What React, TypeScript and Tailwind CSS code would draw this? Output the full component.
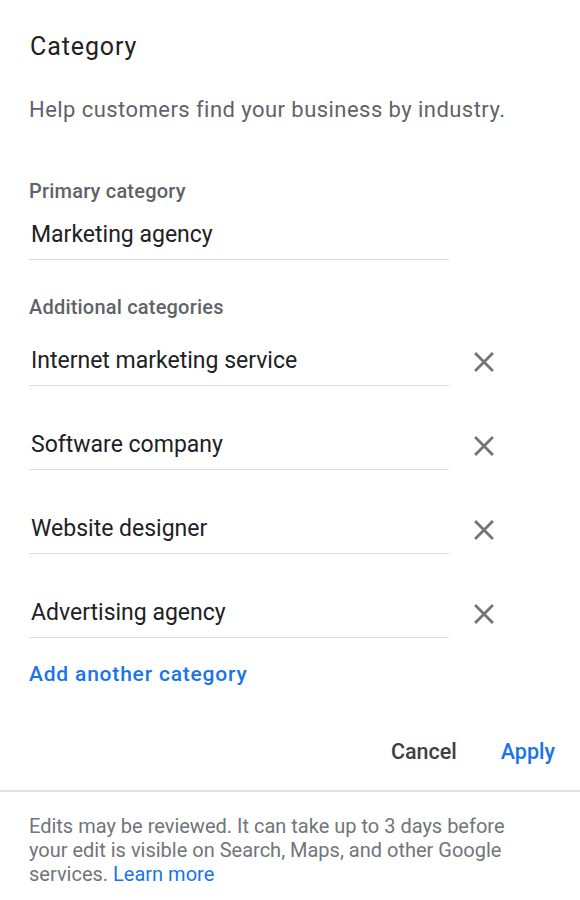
import React from "react";

const CloseIcon = () => (
  <svg width="34" height="34" viewBox="0 0 24 24" fill="#757575">
    <path d="M19 6.41L17.59 5 12 10.59 6.41 5 5 6.41 10.59 12 5 17.59 6.41 19 12 13.41 17.59 19 19 17.59 13.41 12z" />
  </svg>
);

const Field = ({ value, removable }: { value: string; removable?: boolean }) => (
  <div className="flex items-center">
    <div className="w-[420px] border-b border-[#dadce0] pb-[10px] pl-[2px] text-[23px] leading-[28px] text-[#202124]">
      {value}
    </div>
    {removable && (
      <div className="ml-[18px] -mt-[10px] flex items-center justify-center">
        <CloseIcon />
      </div>
    )}
  </div>
);

export default function App() {
  const extra = [
    "Internet marketing service",
    "Software company",
    "Website designer",
    "Advertising agency",
  ];
  return (
    <div
      className="w-[580px] h-[900px] bg-white overflow-hidden"
      style={{ fontFamily: "Roboto, 'Noto Sans', sans-serif" }}
    >
      <div className="px-[29px]">
        <div className="pt-[31px] text-[25px] leading-[32px] tracking-[0.9px] text-[#202124] pl-[1px]">
          Category
        </div>
        <div className="mt-[33px] text-[22px] leading-[28px] tracking-[0.45px] text-[#5f6368]">
          Help customers find your business by industry.
        </div>
        <div className="mt-[55px] text-[20px] leading-[24px] tracking-[0.2px] font-medium text-[#5f6368]">
          Primary category
        </div>
        <div className="mt-[18px]">
          <Field value="Marketing agency" />
        </div>
        <div className="mt-[35px] text-[20px] leading-[24px] tracking-[0.2px] font-medium text-[#5f6368]">
          Additional categories
        </div>
        <div className="mt-[28px] flex flex-col gap-[45px]">
          {extra.map((e) => (
            <Field key={e} value={e} removable />
          ))}
        </div>
        <div className="mt-[24px] text-[21px] leading-[24px] font-medium text-[#1a73e8] tracking-[0.8px]">
          Add another category
        </div>
        <div className="mt-[54px] flex justify-end gap-[44px] -mr-[4px] text-[21.5px] leading-[24px] font-medium">
          <span className="text-[#3c4043]">Cancel</span>
          <span className="text-[#1a73e8]">Apply</span>
        </div>
      </div>
      <div className="mt-[26px] border-t-2 border-[#e0e0e0]" />
      <div className="px-[29px] pt-[22px] text-[20px] leading-[24px] text-[#70757a]">
        Edits may be reviewed. It can take up to 3 days before
        <br />
        your edit is visible on Search, Maps, and other Google
        <br />
        services. <span className="text-[#1a73e8]">Learn more</span>
      </div>
    </div>
  );
}
